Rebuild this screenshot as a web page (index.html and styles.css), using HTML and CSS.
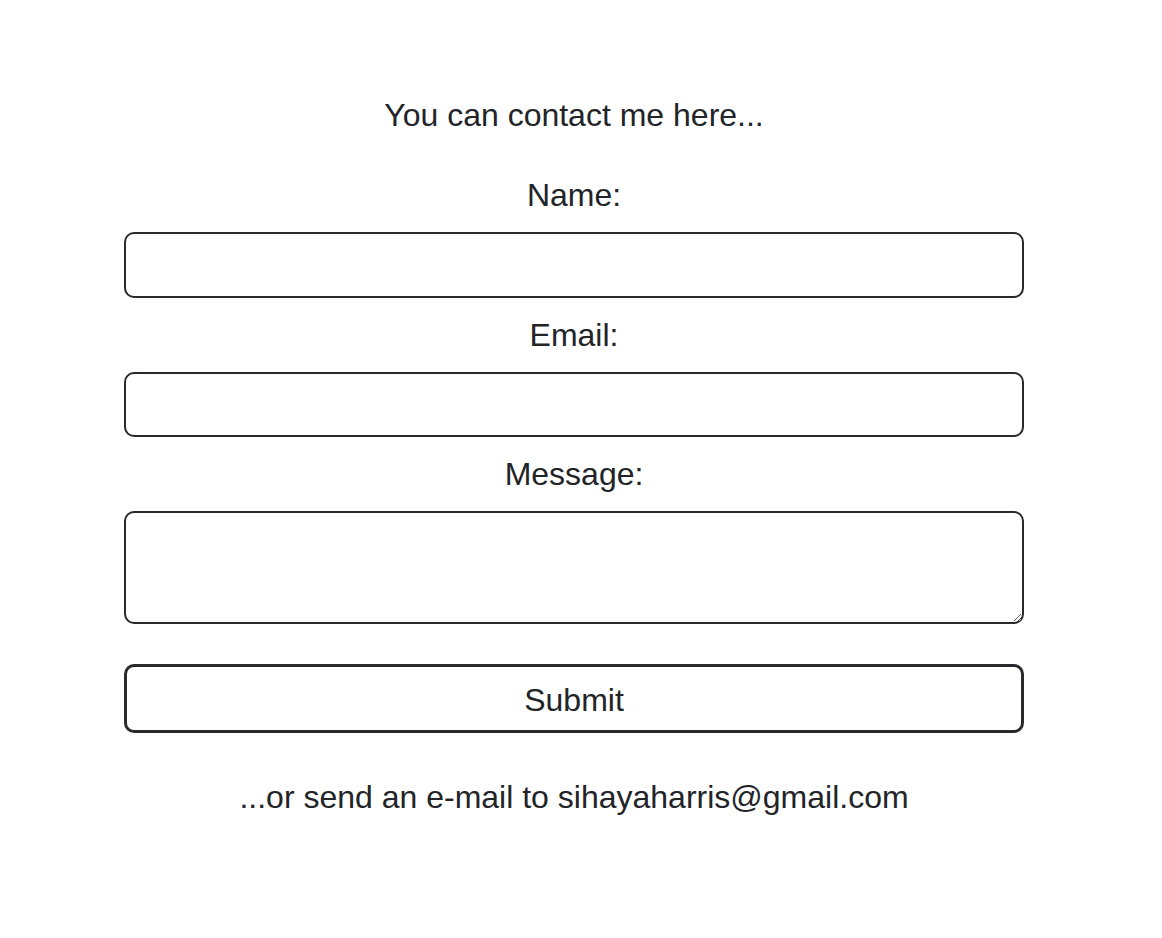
FILE: index.html
```html
<!DOCTYPE html>
<html lang="en">
<head>
<meta charset="utf-8">
<title>Contact</title>
<link rel="stylesheet" href="styles.css">
</head>
<body>
<main class="page">
  <section class="contact">
    <p class="intro">You can contact me here...</p>
    <form class="form">
      <label class="label" for="name">Name:</label>
      <input class="field" id="name" type="text">
      <label class="label" for="email">Email:</label>
      <input class="field" id="email" type="email">
      <label class="label" for="message">Message:</label>
      <textarea class="field area" id="message"></textarea>
      <button class="submit" type="button">Submit</button>
    </form>
    <p class="outro">...or send an e-mail to sihayaharris@gmail.com</p>
  </section>
</main>
</body>
</html>
```

FILE: styles.css
```css
html, body {
  margin: 0;
  padding: 0;
  background: #ffffff;
}

body {
  font-family: "Liberation Sans", Arial, sans-serif;
  color: #222428;
  font-size: 32px;
}

.page {
  width: 1148px;
  display: flex;
  justify-content: center;
  padding-top: 97px;
}

.contact {
  width: 900px;
  display: flex;
  flex-direction: column;
  align-items: center;
}

.intro {
  margin: 0 0 43px;
  line-height: normal;
}

.form {
  width: 100%;
  display: flex;
  flex-direction: column;
  align-items: center;
}

.label {
  line-height: normal;
  margin-bottom: 18px;
}

.field {
  box-sizing: border-box;
  width: 100%;
  height: 65.5px;
  border: 2px solid #2a2a2e;
  border-radius: 10px;
  background: #fff;
  font: inherit;
  margin: 0 0 19px;
  padding: 4px 12px;
  outline: none;
}

.area {
  height: 113px;
  resize: vertical;
  margin-bottom: 40px;
  display: block;
}

.submit {
  box-sizing: border-box;
  width: 100%;
  height: 69px;
  border: 3px solid #2a2a2e;
  border-radius: 10px;
  background: #fff;
  color: #222428;
  font: inherit;
  padding: 3px 0 0;
}

.outro {
  margin: 46px 0 0;
  line-height: normal;
}
```
